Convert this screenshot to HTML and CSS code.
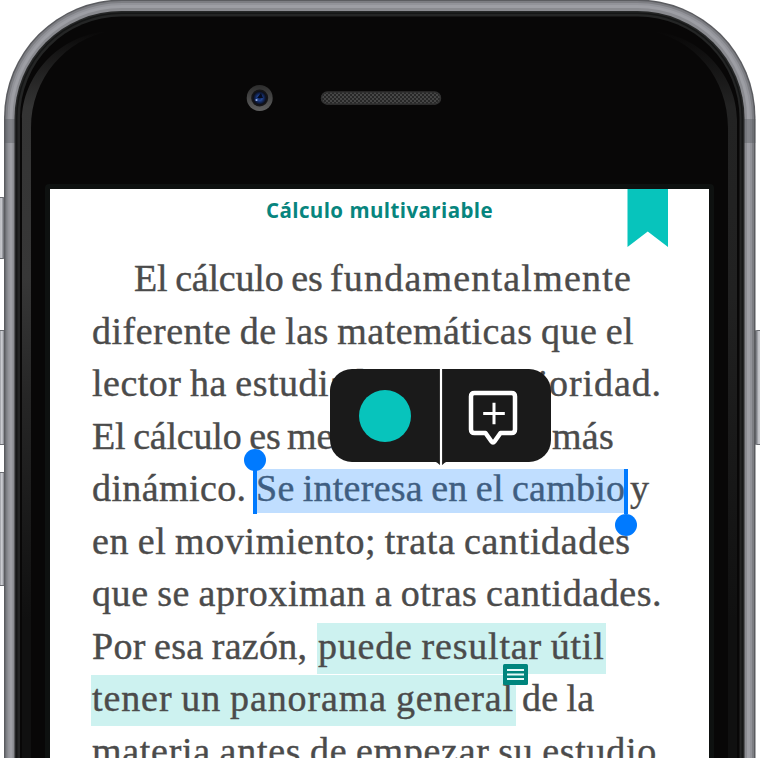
FILE: index.html
```html
<!DOCTYPE html>
<html lang="es">
<head>
<meta charset="utf-8">
<title>Cálculo multivariable</title>
<link rel="stylesheet" href="styles.css">
</head>
<body>
<main class="phone">
  <svg class="frame" viewBox="0 0 760 758" aria-hidden="true">
    <defs>
      <linearGradient id="key" x1="0" x2="1"><stop offset=".55" stop-color="#8d8f95"/><stop offset=".7" stop-color="#d4d5da"/><stop offset=".85" stop-color="#85878d"/><stop offset="1" stop-color="#505257"/></linearGradient>
      <linearGradient id="keyR" x1="0" x2="1"><stop offset="0" stop-color="#505257"/><stop offset=".16" stop-color="#85878d"/><stop offset=".32" stop-color="#d0d1d6"/><stop offset=".5" stop-color="#a0a2a8"/></linearGradient>
      <linearGradient id="glareL" gradientUnits="userSpaceOnUse" x1="0" y1="30" x2="0" y2="620"><stop offset="0" stop-color="#383838" stop-opacity="0"/><stop offset=".13" stop-color="#343434"/><stop offset=".42" stop-color="#373737"/><stop offset=".62" stop-color="#262626"/><stop offset="1" stop-color="#101010"/></linearGradient>
      <linearGradient id="glareR" gradientUnits="userSpaceOnUse" x1="0" y1="30" x2="0" y2="620"><stop offset="0" stop-color="#222" stop-opacity="0"/><stop offset=".13" stop-color="#232323"/><stop offset=".45" stop-color="#212121"/><stop offset="1" stop-color="#101010"/></linearGradient>
      <linearGradient id="ring" x1="0" y1="0" x2="0" y2="1"><stop offset="0" stop-color="#2c2c2c"/><stop offset="1" stop-color="#606060"/></linearGradient>
      <radialGradient id="lens"><stop offset="0" stop-color="#10204e"/><stop offset=".35" stop-color="#204594"/><stop offset=".65" stop-color="#122555"/><stop offset="1" stop-color="#0b0b10"/></radialGradient>
      <pattern id="mesh" width="4" height="4" patternUnits="userSpaceOnUse"><rect width="4" height="4" fill="#464646"/><path d="M0 0h2v2H0zM2 2h2v2H2z" fill="#272727"/></pattern>
    </defs>
    <g stroke="#6a6c71">
      <rect x="-8" y="197.500" width="13" height="61" rx="2" fill="url(#key)"/>
      <rect x="-8" y="330.500" width="14" height="114" rx="2" fill="url(#key)"/>
      <rect x="-8" y="472.500" width="14" height="113" rx="2" fill="url(#key)"/>
      <rect x="754.500" y="330.500" width="14" height="114" rx="2" fill="url(#keyR)"/>
    </g>
    <rect x="4" y="-.5" width="751.500" height="900" rx="118" fill="#5b5c60"/>
    <rect x="5.500" y="1" width="748.500" height="900" rx="116.500" fill="#7d7e83"/>
    <rect x="7.500" y="3" width="744.500" height="900" rx="114.500" fill="#929399"/>
    <rect x="9.500" y="5" width="740.500" height="900" rx="112.500" fill="#9d9ea4"/>
    <rect x="12.500" y="8" width="734.500" height="900" rx="109.500" fill="#8a8b90"/>
    <path d="M4 119h12v24H4zM744 119h11.500v24H744z" fill="#55565b" opacity=".38"/>
    <rect x="14.500" y="11" width="730" height="900" rx="107" fill="#252626"/>
    <rect x="16" y="12.500" width="727" height="900" rx="105.500" fill="#151616"/>
    <rect x="17.500" y="14" width="724" height="900" rx="104" fill="#242525"/>
    <rect x="20" y="16.500" width="719.500" height="900" rx="101.500" fill="#080707"/>
    <path d="M22 758V120C22 77 58 34 110 31C66 39 31 78 31 128V758Z" fill="url(#glareL)"/>
    <path d="M737 758V120C737 77 702 34 650 31C694 39 728 78 728 128V758Z" fill="url(#glareR)"/>
    <rect x="45" y="184" width="669" height="700" rx="4" fill="#0e1110"/>
    <circle cx="259.700" cy="98" r="13" fill="url(#ring)"/>
    <circle cx="259.700" cy="98" r="8.500" fill="#151518"/>
    <circle cx="259.700" cy="98" r="6.800" fill="url(#lens)"/>
    <path d="M257 98l4-5 2 5z" fill="#060b1d"/>
    <circle cx="256.500" cy="100" r="1.100" fill="#9bb4ee"/>
    <rect x="321" y="92" width="120" height="12.500" rx="6.250" fill="url(#mesh)"/>
    <rect x="321.500" y="92" width="119" height="12" rx="6" fill="none" stroke="#303030" stroke-width="1.500"/>
  </svg>

  <section class="screen">
    <header class="bar"><h1 class="title">Cálculo multivariable</h1></header>
    <svg class="bookmark" viewBox="0 0 41 58" aria-hidden="true"><path d="M.5 0H41V58L20.750 42.500 .5 58Z" fill="#07c4bc"/></svg>

    <article class="page">
      <p class="line first"><span class="run l1a">El cálculo es</span><span class="run l1b">fundamentalmente</span></p>
      <p class="line"><span class="run l2">diferente de las matemáticas que el</span></p>
      <p class="line"><span class="run l3a">lector ha estudiado con</span><span class="run l3b">anterioridad.</span></p>
      <p class="line"><span class="run l4a">El cálculo es</span><span class="run l4b">menos estático y</span><span class="run l4c">más</span></p>
      <p class="line"><span class="run l5a">dinámico.</span><span class="run l5b selected">Se interesa en el cambio<i class="handle start"></i><i class="handle end"></i></span><span class="run l5c">y</span></p>
      <p class="line"><span class="run l6">en el movimiento; trata cantidades</span></p>
      <p class="line"><span class="run l7">que se aproximan a otras cantidades.</span></p>
      <p class="line"><span class="run l8a">Por esa razón,</span><span class="run l8b marked">puede resultar útil</span></p>
      <p class="line"><span class="run l9a marked">tener un panorama general<svg class="note" viewBox="0 0 25 21" aria-hidden="true"><rect width="25" height="21" rx="1.500" fill="#00857d"/><path d="M4 6h17M4 10.500h17M4 15h17" stroke="#e8fbf9" stroke-width="2.200"/></svg></span><span class="run l9b">de la</span></p>
      <p class="line"><span class="run l10">materia antes de empezar su estudio</span></p>
    </article>

    <div class="popup">
      <div class="cell"><span class="swatch"></span></div>
      <div class="cell">
        <svg class="comment" viewBox="0 0 50 56" fill="none" stroke="#fff" aria-hidden="true"><path d="M6.500 3H43.500Q47 3 47 6.500V39.500Q47 43 43.500 43H32.500L26.500 51.500Q25 53.500 23.500 51.500L17.500 43H6.500Q3 43 3 39.500V6.500Q3 3 6.500 3Z" stroke-width="4.500" stroke-linejoin="round"/><path d="M15.200 23.500H36.800M26 12.700V34.300" stroke-width="3"/></svg>
      </div>
      <svg class="pointer" viewBox="0 0 14 98" aria-hidden="true"><path d="M0 92H14Q11 93 7 97Q3 93 0 92Z" fill="#1a1a1a"/><path d="M7 0V98" stroke="#fff" stroke-width="2.200"/></svg>
    </div>
  </section>
</main>
</body>
</html>
```
FILE: styles.css
```css
* { box-sizing: border-box; }
body { margin: 0; background: #fff; overflow: hidden; }
.phone { position: relative; width: 760px; height: 758px; padding: 189px 51px 0 50px; overflow: hidden; }
.frame { position: absolute; inset: 0; width: 760px; height: 758px; }
.screen { position: relative; height: 569px; background: #fff; overflow: hidden; }
.bar { height: 63px; padding-top: 7px; }
.title { margin: 0 auto; width: 227px; color: #07857e; font: 700 20.5px/28px "Open Sans", sans-serif; letter-spacing: .4px; white-space: nowrap; text-align-last: justify; }
.bookmark { position: absolute; left: 577px; top: 0; width: 41px; height: 58px; }

.page { padding-left: 42px; color: #4b4b4b; font: 38px/52.5px "Liberation Serif", serif; word-spacing: -1.5px; -webkit-text-stroke: .4px; }
.line { display: flex; margin: 0; height: 52.5px; white-space: nowrap; }
.first { padding-left: 42px; }
.run { position: relative; flex: none; z-index: 0; }
.l1a { width: 196px; letter-spacing: -.2px; }
.l1b { letter-spacing: 1.2px; }
.l2 { letter-spacing: .48px; }
.l3a { width: 371px; letter-spacing: .5px; }
.l3b { width: 199px; letter-spacing: .9px; direction: ltr; display: flex; justify-content: flex-end; }
.l4a { width: 195px; letter-spacing: -.2px; }
.l4b { width: 265px; }
.l4c { letter-spacing: .3px; }
.l5a { width: 164px; letter-spacing: .4px; }
.l5b { width: 374px; letter-spacing: .25px; }
.l6 { letter-spacing: .63px; }
.l7 { letter-spacing: .57px; }
.l8a { width: 226px; letter-spacing: .3px; }
.l8b { width: 288px; letter-spacing: .8px; }
.l9a { width: 430px; letter-spacing: .9px; }
.l9b { letter-spacing: .2px; }
.l10 { letter-spacing: .71px; }

.selected { color: #3f5e82; }
.selected::before, .marked::before { content: ""; position: absolute; z-index: -1; }
.selected::before { left: 1px; width: 370px; top: 7px; height: 44px; background: #c0deff; }
.marked::before { top: 3px; height: 51px; background: #cdf2f0; }
.l8b::before { left: -1px; width: 289px; }
.l9a::before { left: -1px; width: 425px; }
.handle { position: absolute; top: 7px; width: 4px; height: 45px; background: #007aff; }
.handle::after { content: ""; position: absolute; left: -9px; width: 22px; height: 22px; border-radius: 50%; background: #007aff; }
.start { left: -3px; }
.start::after { top: -20px; }
.end { left: 368px; }
.end::after { top: 45px; }
.note { position: absolute; width: 25px; height: 21px; left: 411px; top: -8px; }

.popup { position: absolute; left: 280px; top: 180px; z-index: 2; width: 221px; height: 93px; border-radius: 22px; background: #1a1a1a; display: flex; }
.cell { flex: 1; display: flex; align-items: center; justify-content: center; }
.swatch { width: 52px; height: 52px; margin-right: 1px; border-radius: 50%; background: #07c4bc; }
.comment { width: 50px; height: 56px; margin: 4px 5px 0 0; }
.pointer { position: absolute; left: 103.5px; top: 0; width: 14px; height: 98px; }
```
